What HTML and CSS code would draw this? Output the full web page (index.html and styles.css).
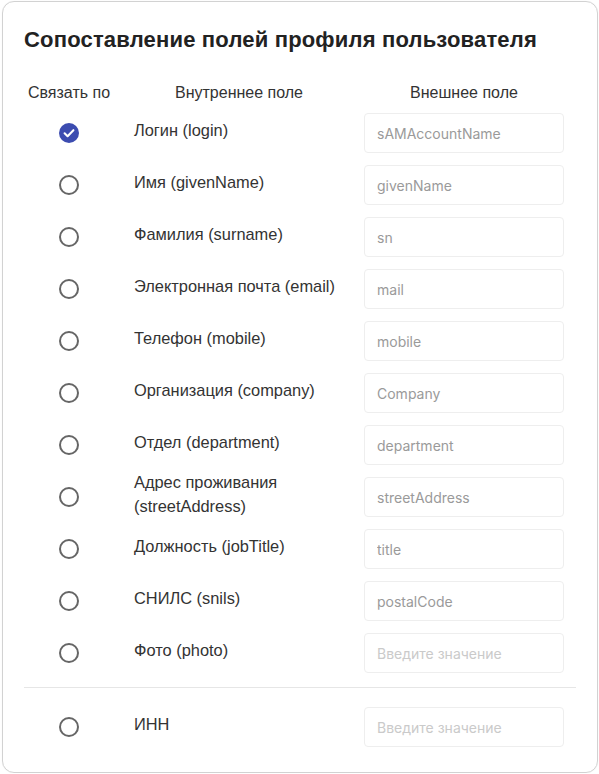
FILE: index.html
```html
<!DOCTYPE html>
<html lang="ru">
<head>
<meta charset="utf-8">
<title>Сопоставление полей профиля пользователя</title>
<link rel="stylesheet" href="styles.css">
</head>
<body>
<div class="card">
  <h2 class="title">Сопоставление полей профиля пользователя</h2>
  <div class="grid head">
    <div class="c1">Связать по</div>
    <div class="c2">Внутреннее поле</div>
    <div class="c3">Внешнее поле</div>
  </div>
  <div class="rows">
    <div class="grid row">
      <div class="c1"><span class="radio checked"><svg viewBox="0 0 20 20" width="20" height="20"><circle cx="10" cy="10" r="10" fill="#3c4cb0"/><path d="M5.6 10.3l3 2.9 5.8-6" fill="none" stroke="#fff" stroke-width="2.1" stroke-linecap="round" stroke-linejoin="round"/></svg></span></div>
      <div class="label">Логин (login)</div>
      <div class="field"><input class="inp" placeholder="sAMAccountName"></div>
    </div>
    <div class="grid row">
      <div class="c1"><span class="radio"></span></div>
      <div class="label">Имя (givenName)</div>
      <div class="field"><input class="inp" placeholder="givenName"></div>
    </div>
    <div class="grid row">
      <div class="c1"><span class="radio"></span></div>
      <div class="label">Фамилия (surname)</div>
      <div class="field"><input class="inp" placeholder="sn"></div>
    </div>
    <div class="grid row">
      <div class="c1"><span class="radio"></span></div>
      <div class="label">Электронная почта (email)</div>
      <div class="field"><input class="inp" placeholder="mail"></div>
    </div>
    <div class="grid row">
      <div class="c1"><span class="radio"></span></div>
      <div class="label">Телефон (mobile)</div>
      <div class="field"><input class="inp" placeholder="mobile"></div>
    </div>
    <div class="grid row">
      <div class="c1"><span class="radio"></span></div>
      <div class="label">Организация (company)</div>
      <div class="field"><input class="inp" placeholder="Company"></div>
    </div>
    <div class="grid row">
      <div class="c1"><span class="radio"></span></div>
      <div class="label">Отдел (department)</div>
      <div class="field"><input class="inp" placeholder="department"></div>
    </div>
    <div class="grid row">
      <div class="c1"><span class="radio"></span></div>
      <div class="label">Адрес проживания (streetAddress)</div>
      <div class="field"><input class="inp" placeholder="streetAddress"></div>
    </div>
    <div class="grid row">
      <div class="c1"><span class="radio"></span></div>
      <div class="label">Должность (jobTitle)</div>
      <div class="field"><input class="inp" placeholder="title"></div>
    </div>
    <div class="grid row">
      <div class="c1"><span class="radio"></span></div>
      <div class="label">СНИЛС (snils)</div>
      <div class="field"><input class="inp" placeholder="postalCode"></div>
    </div>
    <div class="grid row">
      <div class="c1"><span class="radio"></span></div>
      <div class="label">Фото (photo)</div>
      <div class="field"><input class="inp empty" placeholder="Введите значение"></div>
    </div>
  </div>
  <div class="divider"></div>
  <div class="grid row">
    <div class="c1"><span class="radio"></span></div>
    <div class="label">ИНН</div>
    <div class="field"><input class="inp empty" placeholder="Введите значение"></div>
  </div>
</div>
</body>
</html>
```

FILE: styles.css
```css
* { box-sizing: border-box; }
html, body { margin: 0; padding: 0; background: #fff; }
body {
  font-family: "Liberation Sans", Arial, sans-serif;
  color: #333;
  font-size: 16px;
}
.card {
  width: 596px;
  height: 772px;
  margin: 1px 0 0 2px;
  border: 1px solid #d2d2d2;
  border-radius: 12px;
  padding: 24px 21px 0 21px;
  box-shadow: 0 0 1px rgba(0,0,0,0.08);
}
.title {
  margin: 0;
  font-size: 22px;
  line-height: 28px;
  font-weight: 700;
  letter-spacing: 0.18px;
  color: #222;
}
.grid {
  display: grid;
  grid-template-columns: 90px 210px 200px;
  grid-template-rows: 40px;
  column-gap: 20px;
  align-items: center;
}
.head {
  margin-top: 27px;
  grid-template-rows: 24px;
  line-height: 24px;
  color: #333;
}
.head .c1, .head .c2, .head .c3 { text-align: center; }
.rows {
  margin-top: 8px;
  display: flex;
  flex-direction: column;
  gap: 12px;
}
.row { height: 40px; }
.c1 { display: flex; justify-content: center; }
.label {
  font-size: 16.4px;
  line-height: 24px;
  color: #333;
  margin-top: -6px;
}
.radio {
  width: 20px;
  height: 20px;
  border: 2px solid #666;
  border-radius: 50%;
  display: block;
}
.radio.checked { border: none; }
.radio svg { display: block; }
.inp {
  display: block;
  width: 200px;
  height: 40px;
  border: 1px solid #eeeeee;
  border-radius: 4px;
  padding: 0 12px;
  font-family: Inter, "Liberation Sans", sans-serif;
  font-size: 14px;
  color: #333;
  background: #fff;
  outline: none;
}
.inp::placeholder { color: #9a9a9a; }
.inp.empty::placeholder { color: #cacaca; }
.divider {
  height: 1px;
  background: #e6e6e6;
  margin: 14px 0 19px 0;
}
```
